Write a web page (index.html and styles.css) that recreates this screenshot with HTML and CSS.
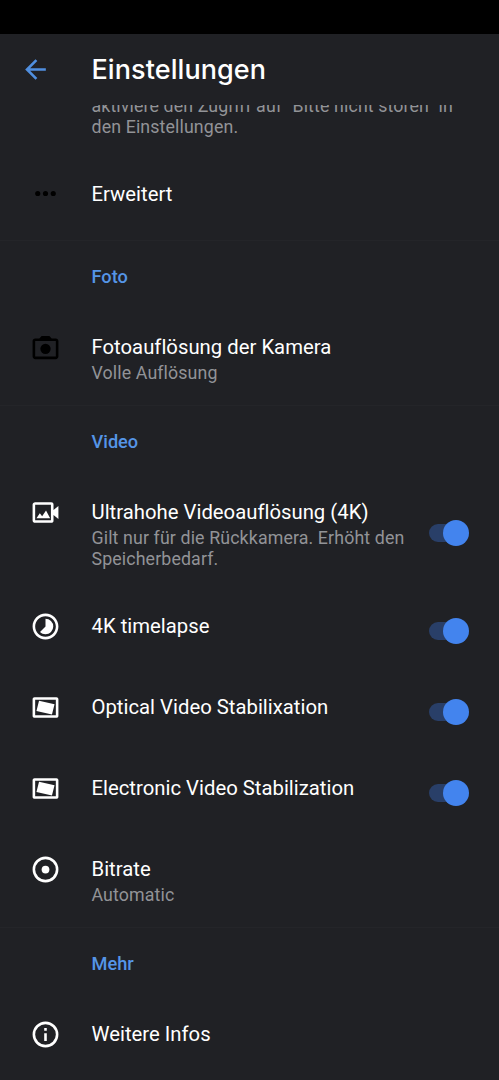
FILE: index.html
```html
<!DOCTYPE html>
<html lang="de">
<head>
<meta charset="utf-8">
<title>Einstellungen</title>
<link rel="stylesheet" href="styles.css">
</head>
<body>
<div class="screen">
  <div class="statusbar"></div>
  <header class="appbar">
    <svg class="back" viewBox="0 0 24 24"><path d="M20 11H7.830l5.590-5.590L12 4l-8 8 8 8 1.410-1.410L7.830 13H20v-2z"/></svg>
    <h1 class="heading">Einstellungen</h1>
  </header>
  <main class="list">
    <section class="group">
      <div class="row row-clipped">
        <div class="text"><div class="summary">aktiviere den Zugriff auf "Bitte nicht stören" in<br>den Einstellungen.</div></div>
      </div>
      <div class="row row-advanced">
        <svg class="icon dark" viewBox="0 0 24 24"><circle cx="6" cy="12" r="2"/><circle cx="12" cy="12" r="2"/><circle cx="18" cy="12" r="2"/></svg>
        <div class="text"><div class="title">Erweitert</div></div>
      </div>
    </section>
    <section class="group">
      <h2 class="category category-first">Foto</h2>
      <div class="row row-two">
        <svg class="icon dark" viewBox="0 0 24 24"><path d="M20 5h-3.200L15 3H9L7.200 5H4c-1.100 0-2 .9-2 2v12c0 1.100.9 2 2 2h16c1.100 0 2-.9 2-2V7c0-1.100-.9-2-2-2zm0 14H4V7h16v12z"/><circle cx="12" cy="13" r="4"/></svg>
        <div class="text"><div class="title">Fotoauflösung der Kamera</div><div class="summary">Volle Auflösung</div></div>
      </div>
    </section>
    <section class="group">
      <h2 class="category">Video</h2>
      <div class="row row-three">
        <svg class="icon" viewBox="0 0 24 24"><path fill-rule="evenodd" d="M4 4h12.500c1 0 1.700.7 1.700 1.700v4.300L22 7v10l-3.800-3v4.300c0 1-.7 1.700-1.700 1.700H4c-1.100 0-2-.8-2-1.800V5.800C2 4.800 2.900 4 4 4zm0 2v12h12.200V6zM5 16.500l2.600-4 1.800 2.400 3-4.400 3.200 6z"/></svg>
        <div class="text"><div class="title">Ultrahohe Videoauflösung (4K)</div><div class="summary">Gilt nur für die Rückkamera. Erhöht den<br>Speicherbedarf.</div></div>
        <div class="switch"></div>
      </div>
      <div class="row">
        <svg class="icon" viewBox="0 0 24 24"><path d="M16.240 7.760A5.974 5.974 0 0 0 12 6v6l-4.240 4.240c2.340 2.340 6.140 2.340 8.490 0a5.990 5.990 0 0 0-.01-8.480zM12 2C6.480 2 2 6.480 2 12s4.480 10 10 10 10-4.480 10-10S17.520 2 12 2zm0 18c-4.420 0-8-3.580-8-8s3.580-8 8-8 8 3.580 8 8-3.580 8-8 8z"/></svg>
        <div class="text"><div class="title">4K timelapse</div></div>
        <div class="switch"></div>
      </div>
      <div class="row">
        <svg class="icon" viewBox="0 0 24 24"><path fill-rule="evenodd" d="M3.500 4h17c.8 0 1.500.7 1.500 1.500v13c0 .8-.7 1.500-1.500 1.500h-17c-.8 0-1.500-.7-1.500-1.500v-13C2 4.700 2.700 4 3.500 4zM4 6v12h16V6zM7 6.800l12 2.700-2 7.900L5 14.700z"/></svg>
        <div class="text"><div class="title">Optical Video Stabilixation</div></div>
        <div class="switch"></div>
      </div>
      <div class="row">
        <svg class="icon" viewBox="0 0 24 24"><path fill-rule="evenodd" d="M3.500 4h17c.8 0 1.500.7 1.500 1.500v13c0 .8-.7 1.500-1.500 1.500h-17c-.8 0-1.500-.7-1.500-1.500v-13C2 4.700 2.700 4 3.500 4zM4 6v12h16V6zM7 6.800l12 2.700-2 7.900L5 14.700z"/></svg>
        <div class="text"><div class="title">Electronic Video Stabilization</div></div>
        <div class="switch"></div>
      </div>
      <div class="row row-two">
        <svg class="icon" viewBox="0 0 24 24"><circle class="ring" cx="12" cy="12" r="9"/><circle cx="12" cy="12" r="3"/></svg>
        <div class="text"><div class="title">Bitrate</div><div class="summary">Automatic</div></div>
      </div>
    </section>
    <section class="group">
      <h2 class="category">Mehr</h2>
      <div class="row">
        <svg class="icon" viewBox="0 0 24 24"><circle class="ring" cx="12" cy="12" r="9"/><path d="M11 7h2v2h-2zM11 11h2v6h-2z"/></svg>
        <div class="text"><div class="title">Weitere Infos</div></div>
      </div>
    </section>
  </main>
</div>
</body>
</html>
```
FILE: styles.css
```css
* { box-sizing: border-box; }
body { margin: 0; background: #202125; font-family: Roboto, sans-serif; }
.screen { display: flex; flex-direction: column; height: 1080px; overflow: hidden; }
.statusbar { flex: none; height: 34px; background: #000; }
.appbar { flex: none; display: flex; align-items: center; height: 71px; padding-left: 20px; }
.back { width: 31px; height: 31px; margin-right: 40.500px; fill: #508fdf; }
.heading { margin: 0; color: #fff; font: 500 27px/36px Inter, sans-serif; letter-spacing: 0.080px; }
.list { flex: 1; overflow: hidden; }
.group + .group { box-shadow: inset 0 1px #242529; }
.row { display: grid; grid-template-columns: 61.500px 1fr auto; align-items: start; height: 81px; padding: 29px 30px 0; }
.row-clipped { height: 48px; padding-top: 0; }
.row-clipped .text { margin-top: -13.500px; }
.row-advanced { height: 87px; }
.row-advanced .icon { margin-top: -4px; }
.row-two { height: 99px; }
.row-three { height: 114px; }
.icon { width: 31px; height: 31px; margin-top: -3.500px; fill: #fff; }
.dark { fill: #000; }
.ring { fill: none; stroke: #fff; stroke-width: 2; }
.text { grid-column: 2; white-space: nowrap; }
.title { color: #fff; font-size: 20.300px; line-height: 24px; letter-spacing: 0.010px; }
.summary { margin-top: 3px; color: #929397; font-size: 17.800px; line-height: 21.300px; letter-spacing: 0.120px; }
.category { height: 66px; margin: 0; padding: 24.500px 0 0 91.500px; color: #5595e7; font: 500 18.200px/24px Roboto, sans-serif; }
.switch { display: grid; align-items: center; width: 40px; height: 26px; margin-top: 4px; }
.row-three .switch { margin-top: 20px; }
.switch::before { content: ""; grid-area: 1 / 1; width: 34px; height: 18px; border-radius: 9px; background: #293f68; }
.switch::after { content: ""; grid-area: 1 / 1; justify-self: end; width: 26px; height: 26px; border-radius: 50%; background: #4384ee; }
```
